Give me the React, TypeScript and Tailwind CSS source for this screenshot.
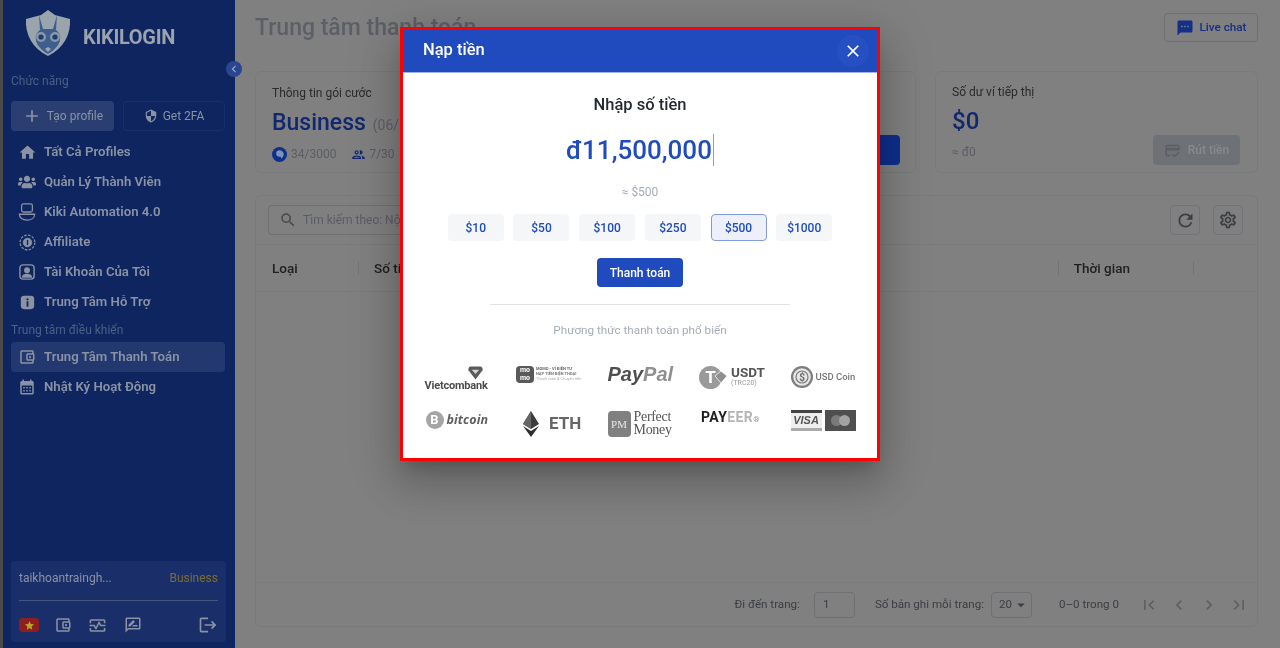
import {
  MdAdd,
  MdArrowDropDown,
  MdCalendarMonth,
  MdChevronLeft,
  MdClose,
  MdFirstPage,
  MdHome,
  MdLastPage,
  MdLogout,
  MdNavigateBefore,
  MdNavigateNext,
  MdOutlineAccountBalanceWallet,
  MdOutlineCreditScore,
  MdOutlineGroup,
  MdOutlineMonitorHeart,
  MdOutlineRateReview,
  MdOutlineSettings,
  MdRefresh,
  MdSearch,
  MdSecurity,
  MdSms,
  MdStar,
} from "react-icons/md";
import { FaUsers } from "react-icons/fa";

const KikiLogo = () => (
  <svg viewBox="0 0 46 46" className="w-[46px] h-[46px] shrink-0">
    <path d="M23 0 L30 5 L45 9 C46 24 39 38 23 46 C7 38 0 24 1 9 L16 5 Z" fill="#9aa4ac" />
    <path d="M14 5 L18 19 L28 19 L32 5 L31 20 C38 25 37 36 23 44 C9 36 8 25 15 20 Z" fill="#3e5e90" />
    <circle cx="16" cy="27" r="5" fill="#8a97a5" />
    <circle cx="30" cy="27" r="5" fill="#8a97a5" />
    <circle cx="16" cy="27" r="2.6" fill="#1c3b6f" />
    <circle cx="30" cy="27" r="2.6" fill="#1c3b6f" />
    <path d="M20 39 L23 37 L26 39 L23 42 Z" fill="#9aa4ac" />
  </svg>
);

const RobotIcon = () => (
  <svg viewBox="0 0 20 20" className="w-[18px] h-[18px]" fill="none" stroke="currentColor" strokeWidth="1.4">
    <rect x="4" y="1" width="12" height="9" rx="2" />
    <path d="M7.500 5.500h.1M12.500 5.500h.1" strokeWidth="2" />
    <path d="M1.500 12.500h17C18.500 16.500 15 19 10 19S1.500 16.500 1.500 12.500Z" />
  </svg>
);

const AffiliateIcon = () => (
  <svg viewBox="0 0 20 20" className="w-[17px] h-[17px]" fill="none" stroke="currentColor">
    <circle cx="10" cy="10" r="8.700" strokeWidth="1.400" strokeDasharray="3 1.600" />
    <circle cx="10" cy="10" r="5" fill="currentColor" />
    <path d="M10 7v6" stroke="#0e2560" strokeWidth="1.600" />
  </svg>
);

const AccountIcon = () => (
  <svg viewBox="0 0 18 18" className="w-[16px] h-[16px]">
    <rect x="1" y="1" width="16" height="16" rx="3.500" fill="none" stroke="currentColor" strokeWidth="1.600" />
    <circle cx="9" cy="7" r="3.300" fill="currentColor" />
    <path d="M3 15.500C3.500 12 6 11 9 11s5.500 1 6 4.500Z" fill="currentColor" />
  </svg>
);

const HelpIcon = () => (
  <svg viewBox="0 0 18 18" className="w-[15px] h-[15px]">
    <rect x="1" y="1" width="16" height="16" rx="4" fill="currentColor" />
    <circle cx="9" cy="5.200" r="1.300" fill="#0e2560" />
    <rect x="7.900" y="7.500" width="2.200" height="6.500" fill="#0e2560" />
  </svg>
);

const PlanIcon = () => (
  <svg viewBox="0 0 16 16" className="w-[15px] h-[15px]">
    <circle cx="8" cy="8" r="8" fill="#0e2f8c" />
    <path d="M8 3.500a4.500 4.500 0 0 1 4.500 4.500c0 2-1.500 3.500-3 4.500v-2H8A2.500 2.500 0 0 1 8 3.500Z" fill="#7d94b8" />
  </svg>
);

const menuTop = [
  { label: "Tất Cả Profiles", icon: <MdHome size={19} /> },
  { label: "Quản Lý Thành Viên", icon: <FaUsers size={18} /> },
  { label: "Kiki Automation 4.0", icon: <RobotIcon /> },
  { label: "Affiliate", icon: <AffiliateIcon /> },
  { label: "Tài Khoản Của Tôi", icon: <AccountIcon /> },
  { label: "Trung Tâm Hỗ Trợ", icon: <HelpIcon /> },
];

const MenuItem = ({ label, icon, active }: { label: string; icon: React.ReactNode; active?: boolean }) => (
  <div className={`h-[30px] ml-[8px] mr-[10px] rounded flex items-center pl-[6px] ${active ? "bg-[#23386e]" : ""}`}>
    <span className="w-[20px] flex justify-center text-[#8a92a4]">{icon}</span>
    <span className="ml-[7px] text-[13.2px] font-semibold text-[#8a92a4] whitespace-nowrap">{label}</span>
  </div>
);

const Sidebar = () => (
  <aside className="w-[235px] shrink-0 h-full bg-[#0e2560] border-l-[3px] border-[#4a4a4a] flex flex-col">
    <div className="h-[63px] flex items-center pl-[22px] pt-[2px]">
      <KikiLogo />
      <span className="ml-[12px] mt-[8px] text-[20px] font-bold text-[#9aa3ae] tracking-[-0.3px]">KIKILOGIN</span>
    </div>
    <div className="pl-[8px] mt-[11px] text-[12px] leading-[14px] text-[#4c5f86]">Chức năng</div>
    <div className="flex gap-[9px] ml-[8px] mt-[13px]">
      <div className="w-[103px] h-[30px] rounded bg-[#2a3e72] flex items-center justify-center text-[12px] text-[#8a92a4]">
        <MdAdd size={20} />
        <span className="ml-[5px]">Tạo profile</span>
      </div>
      <div className="w-[102px] h-[30px] rounded border border-[#1a2f6a] flex items-center justify-center text-[12px] text-[#8a92a4]">
        <MdSecurity size={14} />
        <span className="ml-[5px]">Get 2FA</span>
      </div>
    </div>
    <div className="mt-[6px]">
      {menuTop.map((m) => (
        <MenuItem key={m.label} label={m.label} icon={m.icon} />
      ))}
    </div>
    <div className="pl-[8px] mt-[6px] text-[12px] leading-[14px] text-[#4c5f86]">Trung tâm điều khiển</div>
    <div className="mt-[5px]">
      <MenuItem active label="Trung Tâm Thanh Toán" icon={<MdOutlineAccountBalanceWallet size={18} />} />
      <MenuItem label="Nhật Ký Hoạt Động" icon={<MdCalendarMonth size={18} />} />
    </div>
    <div className="mt-auto mb-[6px] ml-[8px] mr-[9px] h-[81px] rounded bg-[#1a2f6a] px-[8px] pt-[10px]">
      <div className="flex justify-between text-[12px] leading-[14px]">
        <span className="text-[#8a92a4]">taikhoantraingh...</span>
        <span className="text-[#7a6d35]">Business</span>
      </div>
      <div className="h-px bg-[#46557c] mt-[15px]" />
      <div className="flex items-center mt-[14px] text-[#8a92a4]">
        <span className="w-[20px] h-[14px] rounded-sm bg-[#8f1f1f] flex items-center justify-center text-[#b5a52a]">
          <MdStar size={11} />
        </span>
        <MdOutlineAccountBalanceWallet size={18} className="ml-[15px]" />
        <MdOutlineMonitorHeart size={19} className="ml-[16px]" />
        <MdOutlineRateReview size={18} className="ml-[17px]" />
        <MdLogout size={20} className="ml-auto" />
      </div>
    </div>
  </aside>
);

const CardTitle = ({ children }: { children: React.ReactNode }) => (
  <div className="text-[12px] leading-[14px] text-[#2a2a2a]">{children}</div>
);

const Main = () => (
  <main className="flex-1 h-full bg-[#808080] pl-[20px] pr-[22px] flex flex-col min-w-0">
    <div className="h-[71px] flex items-start justify-between pt-[13px]">
      <div className="mt-[1px] text-[23px] leading-[28px] font-medium text-[#5c5f66]">Trung tâm thanh toán</div>
      <div className="w-[94px] h-[29px] rounded border border-[#6f7073] flex items-center justify-center text-[11.7px] font-medium text-[#142f87]">
        <MdSms size={18} />
        <span className="ml-[6px]">Live chat</span>
      </div>
    </div>
    <div className="flex gap-[19px] h-[102px]">
      <div className="flex-1 rounded-md border border-[#797a7c] px-[16px] pt-[14px] relative">
        <CardTitle>Thông tin gói cước</CardTitle>
        <div className="flex items-baseline mt-[8px]">
          <span className="text-[23px] leading-[30px] font-medium text-[#12286e]">Business</span>
          <span className="ml-[7px] text-[14px] text-[#5c5f66]">(06/12/2025)</span>
        </div>
        <div className="flex items-center mt-[7px] text-[12px] text-[#5a5d65]">
          <PlanIcon />
          <span className="ml-[4px]">34/3000</span>
          <MdOutlineGroup size={15} className="ml-[15px] text-[#12286e]" />
          <span className="ml-[3px]">7/30</span>
        </div>
        <div className="absolute right-[15px] bottom-[7px] w-[52px] h-[30px] rounded bg-[#0e2f8c] flex items-center justify-end pr-[12px] text-[12px] text-[#9aa3ae]">
          Nạp tiền
        </div>
      </div>
      <div className="w-[323px] rounded-md border border-[#797a7c] px-[16px] pt-[13px] relative">
        <CardTitle>Số dư ví tiếp thị</CardTitle>
        <div className="text-[24px] leading-[30px] font-medium text-[#12286e] mt-[7px]">$0</div>
        <div className="text-[12px] text-[#5a5d65] mt-[7px]">≈ đ0</div>
        <div className="absolute right-[17px] bottom-[7px] w-[87px] h-[30px] rounded bg-[#6e7276] flex items-center justify-center text-[12px] font-medium text-[#868a8f]">
          <MdOutlineCreditScore size={17} className="text-[#5c6066]" />
          <span className="ml-[7px]">Rút tiền</span>
        </div>
      </div>
    </div>
    <div className="mt-[22px] h-[432px] rounded-md border border-[#797a7c] flex flex-col">
      <div className="h-[49px] shrink-0 pl-[12px] pr-[13px] flex items-center justify-between border-b border-[#797a7c]">
        <div className="w-[300px] h-[30px] rounded border border-[#6f7073] flex items-center pl-[10px] text-[12px] text-[#5a5d65]">
          <MdSearch size={18} className="text-[#45484e]" />
          <span className="ml-[6px]">Tìm kiếm theo: Nội dung</span>
        </div>
        <div className="flex gap-[13px] mr-[1px]">
          <div className="w-[30px] h-[30px] rounded border border-[#727376] flex items-center justify-center text-[#3a3d42]">
            <MdRefresh size={21} />
          </div>
          <div className="w-[30px] h-[30px] rounded border border-[#727376] flex items-center justify-center text-[#3a3d42]">
            <MdOutlineSettings size={20} />
          </div>
        </div>
      </div>
      <div className="h-[47px] shrink-0 flex items-center border-b border-[#797a7c] text-[13.5px] font-medium text-[#1e1e1e]">
        <span className="ml-[16px] w-[86px]">Loại</span>
        <span className="w-px h-[14px] bg-[#727376] mr-[15px]" />
        <span>Số tiền</span>
        <span className="ml-auto w-px h-[14px] bg-[#727376] mr-[15px]" />
        <span className="mr-[63px]">Thời gian</span>
        <span className="w-px h-[14px] bg-[#727376] mr-[63px]" />
      </div>
      <div className="flex-1" />
      <div className="h-[44px] shrink-0 border-t border-[#797a7c] flex items-center justify-end pr-[8px] text-[11.6px] text-[#3a3d42]">
        <span>Đi đến trang:</span>
        <span className="ml-[14px] w-[41px] h-[26px] rounded border border-[#6f7073] flex items-center pl-[8px]">1</span>
        <span className="ml-[20px]">Số bản ghi mỗi trang:</span>
        <span className="ml-[7px] w-[41px] h-[26px] rounded border border-[#6f7073] flex items-center pl-[7px]">
          20
          <MdArrowDropDown size={18} />
        </span>
        <span className="ml-[27px]">0–0 trong 0</span>
        <span className="ml-[20px] flex gap-[10px] text-[#5d6065]">
          <MdFirstPage size={20} />
          <MdNavigateBefore size={20} />
          <MdNavigateNext size={20} />
          <MdLastPage size={20} />
        </span>
      </div>
    </div>
  </main>
);

const amounts = ["$10", "$50", "$100", "$250", "$500", "$1000"];

const Vietcombank = () => (
  <div className="flex flex-col items-end pt-[4px]">
    <svg viewBox="0 0 16 14" className="w-[15px] h-[14px] mr-[5px]">
      <path d="M3 0h10c2 0 3 2 2.500 4L8 14 .5 4C0 2 1 0 3 0Z" fill="#5b5b5b" />
      <path d="M4 3.500h8L8 8Z" fill="#d4d4d4" />
    </svg>
    <span className="text-[11px] leading-[11px] font-bold text-[#4c4c4c] whitespace-nowrap tracking-[-0.2px]">Vietcombank</span>
  </div>
);

const Momo = () => (
  <div className="flex items-start pt-[4px]">
    <div className="w-[18px] h-[17px] rounded-sm bg-[#5a5a5a] text-white text-[7px] leading-[8px] font-bold text-center shrink-0">
      mo
      <br />
      mo
    </div>
    <div className="ml-[2px] text-[4px] leading-[5px] whitespace-nowrap">
      <div className="font-bold text-[#666666]">MOMO - VÍ ĐIỆN TỬ</div>
      <div className="font-bold text-[#777777]">NẠP TIỀN ĐIỆN THOẠI</div>
      <div className="text-[#aaaaaa]">Thanh toán & Chuyển tiền</div>
    </div>
  </div>
);

const PayPal = () => (
  <div className="text-[20px] leading-[22px] font-bold italic whitespace-nowrap [font-family:'Liberation_Sans',sans-serif] pt-[1px]">
    <span className="text-[#4f4f4f]">Pay</span>
    <span className="text-[#8f8f8f]">Pal</span>
  </div>
);

const Usdt = () => (
  <div className="flex items-start pt-[4px]">
    <div className="relative w-[28px] h-[24px] shrink-0">
      <div className="w-[23px] h-[23px] rounded-full bg-[#9a9a9a] text-white text-[17px] leading-[23px] font-bold text-center">T</div>
      <svg viewBox="0 0 12 12" className="absolute right-0 top-[5px] w-[12px] h-[12px]">
        <path d="M6 0 12 5 6 12 0 5Z" fill="#8f8f8f" stroke="#ffffff" strokeWidth="0.800" />
      </svg>
    </div>
    <div className="ml-[4px] flex flex-col">
      <span className="text-[13.5px] leading-[13px] font-bold text-[#555555]">USDT</span>
      <span className="text-[7px] leading-[9px] text-[#999999]">(TRC20)</span>
    </div>
  </div>
);

const UsdCoin = () => (
  <div className="flex items-center pt-[4px]">
    <svg viewBox="0 0 22 22" className="w-[22px] h-[22px] shrink-0">
      <circle cx="11" cy="11" r="11" fill="#7d7d7d" />
      <circle cx="11" cy="11" r="8.800" fill="#e6e6e6" />
      <circle cx="11" cy="11" r="6.600" fill="#7d7d7d" />
      <circle cx="11" cy="11" r="5.400" fill="#e6e6e6" />
      <text x="11" y="14.500" textAnchor="middle" fontSize="10" fontWeight="700" fill="#6d6d6d">$</text>
    </svg>
    <span className="ml-[3px] text-[9.5px] font-medium text-[#777777] whitespace-nowrap">USD Coin</span>
  </div>
);

const Bitcoin = () => (
  <div className="flex items-center pt-[3px] pl-[1px]">
    <div className="w-[18px] h-[18px] rounded-full bg-[#a5a5a5] text-white text-[13px] leading-[18px] font-bold text-center shrink-0">B</div>
    <span className="ml-[3px] text-[12.5px] leading-[18px] font-bold italic text-[#5f5f5f] tracking-[0.1px] [font-family:'Open_Sans',sans-serif]">bitcoin</span>
  </div>
);

const Eth = () => (
  <div className="flex items-center pt-[3px] pl-[7px]">
    <svg viewBox="0 0 16 26" className="w-[16px] h-[26px] shrink-0">
      <path d="M8 0 16 13 8 18 0 13Z" fill="#3c3c3c" />
      <path d="M8 0 0 13 8 18Z" fill="#666666" />
      <path d="M0 15 8 26 16 15 8 20Z" fill="#2e2e2e" />
    </svg>
    <span className="ml-[10px] text-[17px] font-bold text-[#666666]">ETH</span>
  </div>
);

const PerfectMoney = () => (
  <div className="flex items-start pt-[2px] [font-family:'Liberation_Serif',serif]">
    <div className="w-[23px] h-[26px] mt-[1px] rounded-sm bg-[#808080] text-[#e8e8e8] text-[11px] leading-[26px] text-center shrink-0">PM</div>
    <div className="ml-[3px] text-[14px] leading-[13px] text-[#555555] tracking-[-0.3px]">
      Perfect
      <br />
      Money
    </div>
  </div>
);

const Payeer = () => (
  <div className="text-[14px] leading-[18px] font-bold whitespace-nowrap pl-[2px] tracking-[0.4px]">
    <span className="text-[#222222]">PAY</span>
    <span className="text-[#b5b5b5]">EER</span>
    <span className="text-[#9a9a9a] text-[8px]">®</span>
  </div>
);

const Cards = () => (
  <div className="flex gap-[3px] pt-[2px]">
    <div className="w-[31px] h-[21px] flex flex-col">
      <div className="h-[3px] bg-[#444444]" />
      <div className="flex-1 bg-[#eeeeee] text-[11px] leading-[14px] font-bold italic text-center text-[#555555] [font-family:'Liberation_Sans',sans-serif]">
        VISA
      </div>
      <div className="h-[3px] bg-[#aaaaaa]" />
    </div>
    <div className="w-[31px] h-[21px] bg-[#4f4f4f] flex items-center justify-center">
      <span className="w-[11px] h-[11px] rounded-full bg-[#7a7a7a]" />
      <span className="w-[11px] h-[11px] rounded-full bg-[#a3a3a3] -ml-[3px]" />
    </div>
  </div>
);

const paymentLogos = [Vietcombank, Momo, PayPal, Usdt, UsdCoin, Bitcoin, Eth, PerfectMoney, Payeer, Cards];

const DepositModal = () => (
  <div className="absolute inset-0 z-40 flex justify-center items-start pt-[27px]">
    <div className="relative w-[480px] h-[434px] bg-white border-[3px] border-[#ff0000] flex flex-col shadow-[0_11px_15px_-7px_rgba(0,0,0,0.2),0_24px_38px_3px_rgba(0,0,0,0.14),0_9px_46px_8px_rgba(0,0,0,0.12)]">
      <div className="h-[43px] shrink-0 bg-[#1f4bbf] border-b border-[#9fb4e6] flex items-center justify-between pl-[20px] pr-[8px] text-white">
        <span className="text-[16.5px] font-medium pb-[2px]">Nạp tiền</span>
        <span className="w-[32px] h-[32px] rounded-full bg-white/[0.03] flex items-center justify-center">
          <MdClose size={20} />
        </span>
      </div>
      <div className="flex-1 flex flex-col items-center">
        <div className="mt-[22px] text-[16.5px] leading-[20px] font-medium text-[#252b33]">Nhập số tiền</div>
        <div className="mt-[19px] h-[32px] flex items-center text-[26px] font-medium text-[#1f4bbf]">
          <span>đ11,500,000</span>
          <span className="w-px h-[32px] bg-[#7f9be0] ml-px" />
        </div>
        <div className="mt-[19px] text-[12px] leading-[14px] text-[#a5acb6]">≈ $500</div>
        <div className="mt-[15px] flex gap-[9.700px]">
          {amounts.map((a) => (
            <div
              key={a}
              className={`w-[56px] h-[27px] rounded flex items-center justify-center text-[12px] font-medium text-[#1f4bbf] ${
                a === "$500" ? "bg-[#edf0f9] border border-[#7f9be0]" : "bg-[#f5f6f8]"
              }`}
            >
              {a}
            </div>
          ))}
        </div>
        <div className="mt-[17px] w-[86px] h-[29px] rounded bg-[#1f4bbf] flex items-center justify-center text-[12px] font-medium text-white">
          Thanh toán
        </div>
        <div className="mt-[17px] w-[300px] h-px bg-[#dfe3e8]" />
        <div className="mt-[18px] text-[11.7px] leading-[14px] text-[#a5acb6]">Phương thức thanh toán phổ biến</div>
        <div className="mt-[25px] grid grid-cols-[repeat(5,65px)] gap-x-[26.500px] gap-y-[16px]">
          {paymentLogos.map((Logo, i) => (
            <div key={i} className="h-[30px] w-[65px] flex items-start overflow-visible">
              <Logo />
            </div>
          ))}
        </div>
      </div>
    </div>
  </div>
);

export default function App() {
  return (
    <div className="relative w-[1280px] h-[648px] flex overflow-hidden blur-[0.4px] [font-family:Roboto,sans-serif]">
      <Sidebar />
      <Main />
      <div className="absolute left-[226px] top-[61px] w-[16px] h-[16px] rounded-full bg-[#2a4690] flex items-center justify-center text-[#9aa8c8]">
        <MdChevronLeft size={14} />
      </div>
      <DepositModal />
    </div>
  );
}
